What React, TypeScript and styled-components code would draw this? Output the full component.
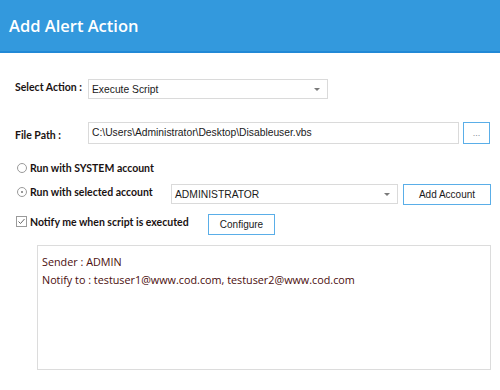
import styled, { createGlobalStyle } from 'styled-components';

const Global = createGlobalStyle`
  html, body {
    margin: 0;
    padding: 0;
    background: #fff;
  }
  body {
    width: 500px;
    height: 390px;
    overflow: hidden;
    font-family: 'Open Sans', 'Noto Sans', sans-serif;
  }
`;

const Header = styled.header`
  height: 51px;
  background: #3399dd;
  border-bottom: 2px solid #2289d6;
  display: flex;
  align-items: center;
  padding-left: 9px;
  box-sizing: content-box;
  h1 {
    margin: 0;
    font-size: 16.5px;
    font-weight: 600;
    color: #fff;
  }
`;

const Form = styled.section`
  display: flex;
  flex-direction: column;
  padding: 26px 9px 0 15px;
`;

const Row = styled.div<{ $h: number; $mt?: number }>`
  display: flex;
  align-items: center;
  height: ${(p) => p.$h}px;
  margin-top: ${(p) => p.$mt ?? 0}px;
`;

const Label = styled.label<{ $w: number; $dy?: number }>`
  width: ${(p) => p.$w}px;
  flex: none;
  font-family: Lato, 'Open Sans', sans-serif;
  font-size: 10.5px;
  font-weight: 700;
  color: #1a1212;
  transform: translateY(${(p) => p.$dy ?? 0}px);
  display: flex;
  align-items: center;
  white-space: nowrap;
`;

const Field = styled.div<{ $w: number; $h?: number }>`
  width: ${(p) => p.$w}px;
  height: ${(p) => p.$h ?? 20}px;
  flex: none;
  box-sizing: border-box;
  border: 1px solid #dadada;
  background: #fff;
  display: flex;
  align-items: center;
  justify-content: space-between;
  padding: 0 7px 0 3px;
  font-family: 'Liberation Sans', Arial, sans-serif;
  font-size: 10.3px;
  color: #1a1a1a;
`;

const Caret = styled.span`
  width: 0;
  height: 0;
  border-left: 3px solid transparent;
  border-right: 3px solid transparent;
  border-top: 3px solid #7a7a7a;
`;

const Button = styled.button<{ $w: number; $h?: number; $ml?: number }>`
  width: ${(p) => p.$w}px;
  height: ${(p) => p.$h ?? 21}px;
  margin-left: ${(p) => p.$ml ?? 0}px;
  flex: none;
  box-sizing: border-box;
  border: 1px solid #5aaee8;
  background: #fff;
  padding: 0;
  font-family: 'Liberation Sans', Arial, sans-serif;
  font-size: 10px;
  color: #1a1a1a;
`;

const Dots = styled.span`
  color: #8a8a9a;
  font-size: 9px;
`;

const Radio = styled.span<{ $on?: boolean }>`
  flex: none;
  width: 10px;
  height: 10px;
  box-sizing: border-box;
  border-radius: 50%;
  border: 1px solid #9a9a9a;
  margin: 0 3px 0 2px;
  display: inline-flex;
  align-items: center;
  justify-content: center;
  &::after {
    content: '';
    width: 2px;
    height: 2px;
    border-radius: 50%;
    background: ${(p) => (p.$on ? '#777' : 'transparent')};
  }
`;

const Check = styled.span`
  flex: none;
  width: 11px;
  height: 11px;
  box-sizing: border-box;
  border: 1px solid #9a9a9a;
  margin: 0 3px 0 1px;
  display: inline-flex;
  svg {
    display: block;
  }
`;

const Notes = styled.div`
  margin: 10px 0 0 22px;
  width: 454px;
  height: 125px;
  box-sizing: border-box;
  border: 1px solid #dcdcdc;
  padding: 9px 0 0 4px;
  font-size: 10.8px;
  color: #4a0d0d;
  p {
    margin: 0 0 5px;
    line-height: 13px;
  }
`;

export default function App() {
  return (
    <>
      <Global />
      <Header>
        <h1>Add Alert Action</h1>
      </Header>
      <Form>
        <Row $h={20}>
          <Label $w={73} $dy={-2}>Select Action :</Label>
          <Field $w={240}>
            <span>Execute Script</span>
            <Caret />
          </Field>
        </Row>
        <Row $h={21} $mt={23}>
          <Label $w={73} $dy={2}>File Path :</Label>
          <Field $w={371} $h={22}>
            <span>C:\Users\Administrator\Desktop\Disableuser.vbs</span>
          </Field>
          <Button $w={27} $h={22} $ml={4}>
            <Dots>...</Dots>
          </Button>
        </Row>
        <Row $h={12} $mt={19}>
          <Label $w={200}>
            <Radio />
            Run with SYSTEM account
          </Label>
        </Row>
        <Row $h={20} $mt={10}>
          <Label $w={156} $dy={-2}>
            <Radio $on />
            Run with selected account
          </Label>
          <Field $w={227}>
            <span>ADMINISTRATOR</span>
            <Caret />
          </Field>
          <Button $w={88} $ml={5}>Add Account</Button>
        </Row>
        <Row $h={21} $mt={10}>
          <Label $w={193} $dy={-3}>
            <Check>
              <svg width="9" height="9" viewBox="0 0 9 9">
                <path d="M1.5 4.5 L3.5 6.5 L7.5 2" fill="none" stroke="#666" strokeWidth="1" />
              </svg>
            </Check>
            Notify me when script is executed
          </Label>
          <Button $w={67}>Configure</Button>
        </Row>
        <Notes>
          <p>Sender : ADMIN</p>
          <p>Notify to : testuser1@www.cod.com, testuser2@www.cod.com</p>
        </Notes>
      </Form>
    </>
  );
}
